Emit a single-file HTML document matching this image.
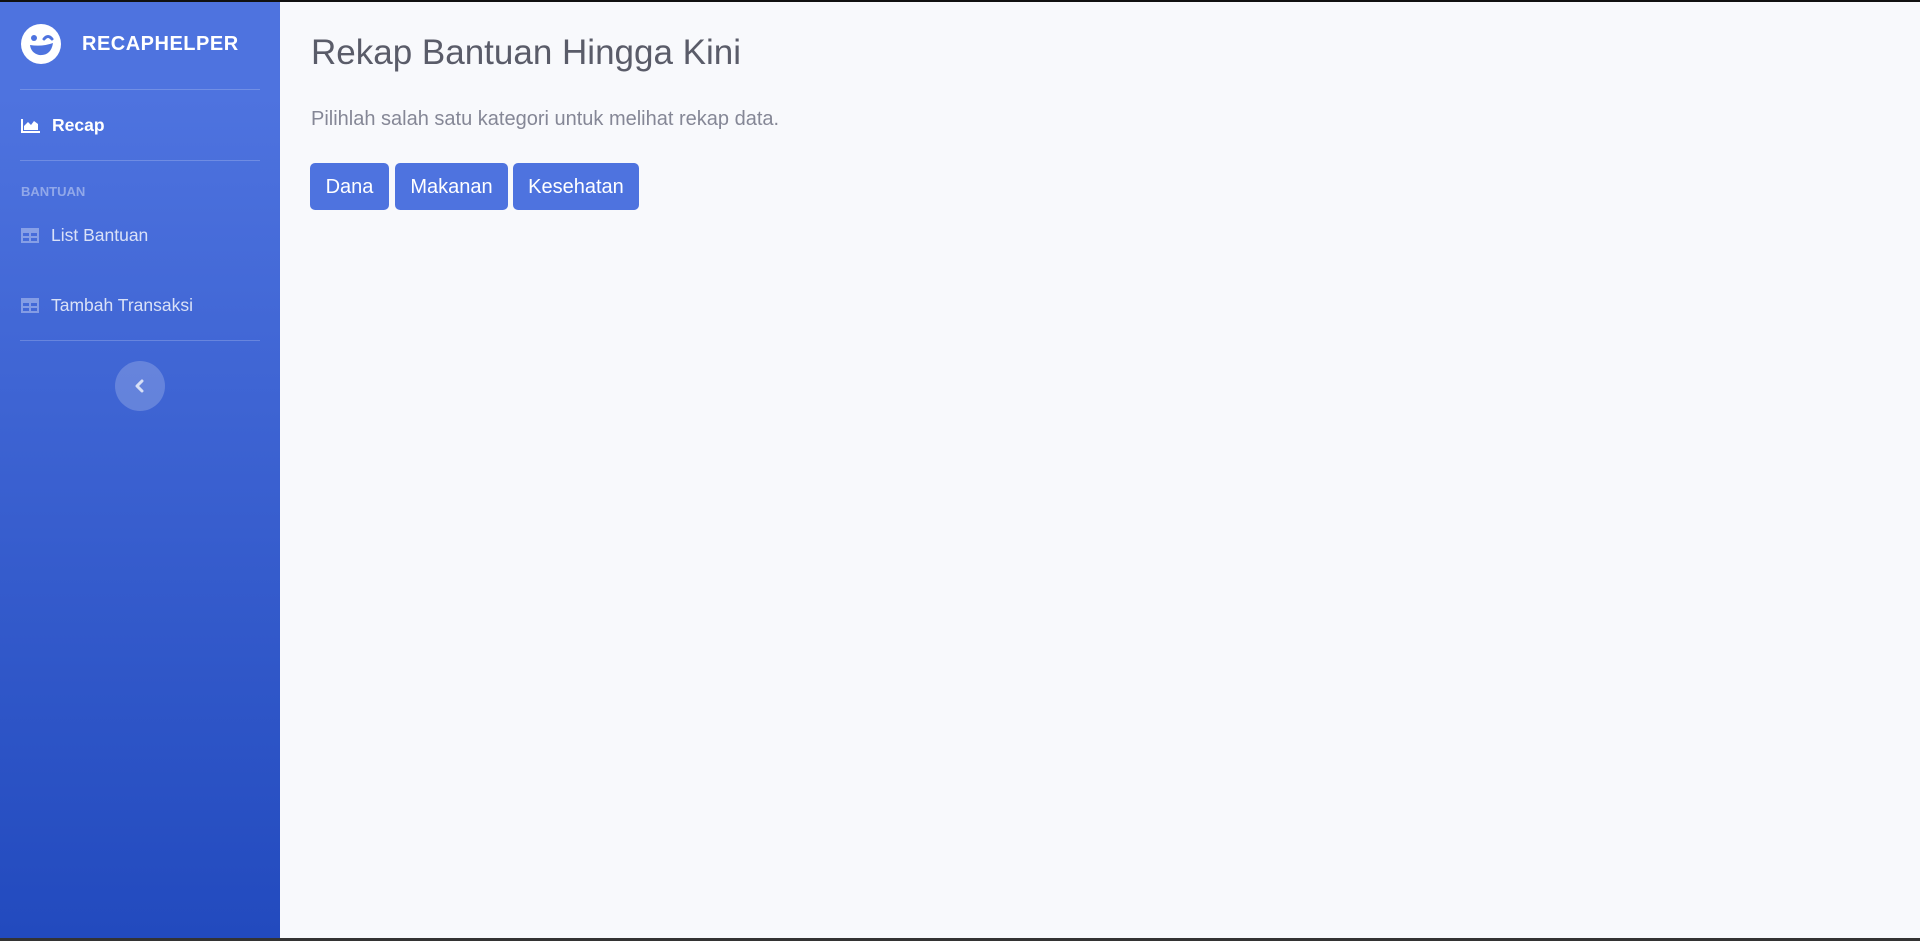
<!DOCTYPE html>
<html><head><meta charset="utf-8">
<style>
*{box-sizing:border-box;margin:0;padding:0}
html,body{width:1920px;height:941px;overflow:hidden;font-family:"Liberation Sans",sans-serif;background:#f8f9fc}
.topline{position:absolute;left:0;top:0;width:1920px;height:2px;background:#111}
.botline{position:absolute;left:0;bottom:0;width:1920px;height:3px;background:#333}
.sb{position:absolute;left:0;top:2px;width:280px;height:936px;background:linear-gradient(180deg,#4e73df 10%,#224abe 100%)}
.brand{position:absolute;left:0;top:0;width:280px;height:86px}
.logo{position:absolute;left:21px;top:22px;width:40px;height:40px}
.bname{position:absolute;left:82px;top:31px;color:#fff;font-weight:bold;font-size:20px;letter-spacing:0.5px}
.hr{position:absolute;left:20px;width:240px;height:1px;background:rgba(255,255,255,.2)}
.item{position:absolute;left:21px;color:rgba(255,255,255,.8);font-size:17.5px;display:flex;align-items:center}
.item svg{margin-right:12px}
.item.active{color:#fff;font-weight:bold}
.head{position:absolute;left:21px;top:182px;color:rgba(255,255,255,.4);font-weight:bold;font-size:13px}
.tog{position:absolute;left:115px;top:359px;width:50px;height:50px;border-radius:50%;background:rgba(255,255,255,.2)}
.main{position:absolute;left:280px;top:2px}
h1{position:absolute;left:31px;top:31px;font-weight:normal;font-size:35px;color:#5a5c69;white-space:nowrap}
p{position:absolute;left:31px;top:106px;font-size:20px;color:#858796;white-space:nowrap}
.btn{position:absolute;top:161px;height:47px;padding-top:2px;background:#4e73df;color:#fff;border-radius:5px;font-size:20px;display:flex;align-items:center;justify-content:center}
</style></head><body>
<div class="topline"></div>
<div class="sb">
 <div class="brand">
  <svg class="logo" viewBox="0 0 40 40"><circle cx="20" cy="20" r="20" fill="#fff"/><circle cx="13" cy="14" r="3" fill="#4e73df"/><path d="M23 15 q4 -5 8 0" stroke="#4e73df" stroke-width="3" fill="none" stroke-linecap="round"/><path d="M9 21 Q21 23 32 19 Q30 32 18 31 Q10 29 9 21Z" fill="#4e73df"/></svg>
  <div class="bname">RECAPHELPER</div>
 </div>
 <div class="hr" style="top:87px"></div>
 <div class="item active" style="top:113px"><svg width="19" height="14" viewBox="0 0 19 14"><path d="M0 0h2v12h17v2H0z M3 11V7l4-4 3 3 3-4 4 3v6z" fill="#fff"/></svg>Recap</div>
 <div class="hr" style="top:158px"></div>
 <div class="head">BANTUAN</div>
 <div class="item" style="top:223px"><svg width="18" height="15" viewBox="0 0 18 15"><path d="M0 0h18v15H0z M2 5v3h6V5z M10 5v3h6V5z M2 10v3h6v-3z M10 10v3h6v-3z" fill="rgba(255,255,255,.35)" fill-rule="evenodd"/></svg>List Bantuan</div>
 <div class="item" style="top:293px"><svg width="18" height="15" viewBox="0 0 18 15"><path d="M0 0h18v15H0z M2 5v3h6V5z M10 5v3h6V5z M2 10v3h6v-3z M10 10v3h6v-3z" fill="rgba(255,255,255,.35)" fill-rule="evenodd"/></svg>Tambah Transaksi</div>
 <div class="hr" style="top:338px"></div>
 <div class="tog"><svg style="position:absolute;left:19px;top:18px" width="12" height="14" viewBox="0 0 12 14"><path d="M8 2L3 7l5 5" stroke="rgba(255,255,255,.75)" stroke-width="3" fill="none" stroke-linecap="round" stroke-linejoin="round"/></svg></div>
</div>
<div class="main">
 <h1>Rekap Bantuan Hingga Kini</h1>
 <p>Pilihlah salah satu kategori untuk melihat rekap data.</p>
 <div class="btn" style="left:30px;width:79px">Dana</div>
 <div class="btn" style="left:115px;width:113px">Makanan</div>
 <div class="btn" style="left:233px;width:126px">Kesehatan</div>
</div>
<div class="botline"></div>
</body></html>
